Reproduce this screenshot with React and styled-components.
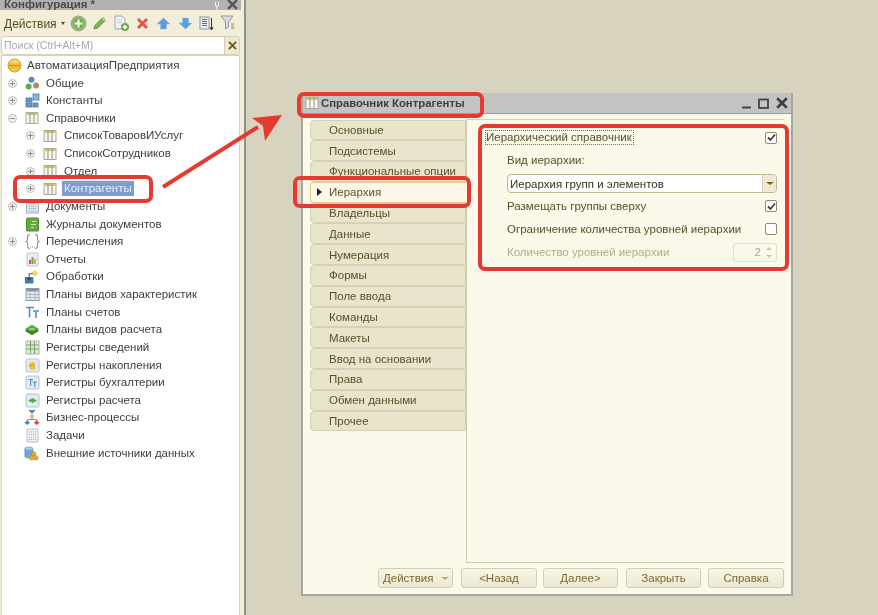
import React from 'react';
import styled, { createGlobalStyle } from 'styled-components';

const Global = createGlobalStyle`
  html, body { margin: 0; padding: 0; height: 100%; }
  body { font-family: "Liberation Sans", Arial, sans-serif; font-size: 11.5px; overflow: hidden; }
`;

const Page = styled.div`
  position: relative;
  width: 878px;
  height: 615px;
  display: flex;
  background: #d8d3bf;
  overflow: hidden;
  filter: blur(0.45px);
`;

/* ---------- left panel ---------- */

const Sidebar = styled.aside`
  width: 244px;
  height: 100%;
  box-sizing: content-box;
  flex: none;
  display: flex;
  flex-direction: column;
  background: #f3eeda;
  border-right: 2px solid #8f8f8b;
`;

const PanelTitle = styled.div`
  height: 10px;
  width: 241px;
  box-sizing: border-box;
  flex: none;
  display: flex;
  align-items: flex-end;
  justify-content: space-between;
  padding: 0 3px 0 4px;
  background: #b2b2b2;
  overflow: hidden;
`;

const PanelTitleText = styled.span`
  font-weight: bold;
  font-size: 11.5px;
  line-height: 12px;
  color: #4a4a48;
`;

const PanelTitleIcons = styled.div`
  display: flex;
  align-items: flex-end;
  gap: 7px;
`;

const Toolbar = styled.div`
  height: 25px;
  margin-top: 1px;
  flex: none;
  display: flex;
  align-items: center;
  padding-left: 4px;
`;

const ToolbarLabel = styled.span`
  color: #5a4a1e;
  font-size: 12px;
  margin-right: 4px;
`;

const ToolButton = styled.span`
  display: inline-flex;
  width: 21.4px;
  justify-content: center;
`;

const SmallArrow = styled.span`
  width: 0;
  height: 0;
  border-left: ${(p) => p.$size || 2.5}px solid transparent;
  border-right: ${(p) => p.$size || 2.5}px solid transparent;
  border-top: ${(p) => (p.$size ? p.$size - 0.5 : 3)}px solid ${(p) => p.$color || '#4a4a30'};
  margin-right: ${(p) => p.$gap ?? 3}px;
`;

const SearchBox = styled.div`
  height: 17px;
  margin: 0 4px 0 1px;
  flex: none;
  display: flex;
  border: 1px solid #d4cfb4;
  border-radius: 3px;
  background: #fff;
  overflow: hidden;
`;

const SearchInput = styled.div`
  flex: 1;
  padding-left: 2px;
  line-height: 17px;
  color: #a9a9a9;
  font-size: 10.6px;
`;

const SearchClear = styled.div`
  width: 14px;
  display: flex;
  align-items: center;
  justify-content: center;
  border-left: 1px solid #d4cfb4;
  background: #efe9d2;
`;

const Tree = styled.div`
  flex: 1;
  margin: 0 4px 0 1px;
  padding-top: 0.6px;
  background: #fff;
  border: 1px solid #d9d4bc;
  border-bottom: 0;
`;

const TreeRow = styled.div`
  height: 17.63px;
  display: flex;
  align-items: center;
  padding-left: ${(p) => p.$indent}px;
  color: #3d3d3d;
  white-space: nowrap;
`;

const Expander = styled.span`
  position: relative;
  width: 9px;
  height: 9px;
  flex: none;
  box-sizing: border-box;
  border: 1px solid #bdbdb8;
  border-radius: 50%;
  background: #f1f1ee;
  margin-right: 7px;
  &::before {
    content: '';
    position: absolute;
    left: 1px;
    right: 1px;
    top: 3px;
    height: 1px;
    background: #8a8a86;
  }
  &::after {
    content: '';
    display: ${(p) => (p.$open ? 'none' : 'block')};
    position: absolute;
    top: 1px;
    bottom: 1px;
    left: 3px;
    width: 1px;
    background: #8a8a86;
  }
`;

const TreeIcon = styled.span`
  width: 16px;
  height: 16px;
  flex: none;
  display: inline-flex;
  align-items: center;
  justify-content: center;
  margin-right: ${(p) => p.$gap}px;
`;

const TreeLabel = styled.span`
  padding: 1px 2px;
  line-height: 13px;
  color: ${(p) => (p.$selected ? '#e8eefa' : 'inherit')};
  background: ${(p) => (p.$selected ? '#7b9dd0' : 'transparent')};
`;

/* ---------- desktop and window ---------- */

const Desktop = styled.main`
  flex: 1;
  padding: 93px 0 0 55px;
`;

const Win = styled.section`
  width: 492px;
  height: 503px;
  box-sizing: border-box;
  display: flex;
  flex-direction: column;
  background: #fbf9ea;
  border: 2px solid #a5a5a3;
  border-top: 0;
`;

const WinTitle = styled.header`
  height: 20px;
  flex: none;
  display: flex;
  align-items: center;
  justify-content: space-between;
  padding: 0 3px 0 2px;
  background: #c3c3c3;
  border-bottom: 1px solid #9c9c9c;
`;

const WinTitleLeft = styled.div`
  display: flex;
  align-items: center;
  gap: 2px;
`;

const WinTitleText = styled.span`
  font-weight: bold;
  font-size: 11.35px;
  color: #3f3f3f;
`;

const WinControls = styled.div`
  display: flex;
  align-items: center;
  gap: 7px;
`;

const WinBody = styled.div`
  flex: 1;
  display: flex;
  padding: 5px 7px 0 7px;
  min-height: 0;
`;

const Tabs = styled.nav`
  width: 156px;
  flex: none;
  display: flex;
  flex-direction: column;
  padding-top: 0.5px;
`;

const Tab = styled.div`
  height: 20.8px;
  box-sizing: border-box;
  flex: none;
  display: flex;
  align-items: center;
  padding-left: 18px;
  position: relative;
  z-index: ${(p) => (p.$active ? 1 : 0)};
  margin-right: ${(p) => (p.$active ? '-1px' : '0')};
  border: 1px solid ${(p) => (p.$active ? '#e3c98e' : '#d6d1b6')};
  border-right: ${(p) => (p.$active ? '0' : '1px solid #d6d1b6')};
  border-radius: 4px 0 0 4px;
  background: ${(p) => (p.$active ? '#fbf9ea' : '#e9e5cd')};
  color: #5b4f28;
  white-space: nowrap;
  overflow: hidden;
`;

const TabMarker = styled.span`
  position: absolute;
  left: 6px;
  top: 5px;
  width: 0;
  height: 0;
  border-top: 4.5px solid transparent;
  border-bottom: 4.5px solid transparent;
  border-left: 5px solid #222;
`;

const Content = styled.div`
  flex: 1;
  display: flex;
  flex-direction: column;
  padding: 10px 7px 0 19px;
  height: 444px;
  box-sizing: border-box;
  border-left: 1px solid #cfc9ac;
  border-top: 1px solid #d8d3b8;
  border-bottom: 1px solid #cfc9ac;
  color: #5b4f28;
`;

const FieldRow = styled.div`
  height: ${(p) => p.$h}px;
  flex: none;
  display: flex;
  align-items: center;
  justify-content: space-between;
  padding-left: ${(p) => p.$indent || 0}px;
  color: ${(p) => (p.$muted ? '#b3a98a' : 'inherit')};
`;

const FocusText = styled.span`
  margin-left: -1px;
  padding: 0 1px 0 0;
  border: 1px dotted #6d6d6d;
  line-height: 13px;
`;

const Check = styled.span`
  width: 10px;
  height: 10px;
  flex: none;
  display: inline-flex;
  align-items: center;
  justify-content: center;
  border: 1px solid #8f8b70;
  border-radius: 2px;
  background: #fff;
`;

const Select = styled.div`
  height: 19px;
  box-sizing: border-box;
  flex: 1;
  display: flex;
  align-items: center;
  border: 1px solid #bdb793;
  border-radius: 4px;
  background: #fff;
  color: #36321f;
  overflow: hidden;
  padding-left: 2px;
`;

const SelectText = styled.span`
  flex: 1;
`;

const SelectArrow = styled.span`
  width: 13px;
  height: 100%;
  display: flex;
  align-items: center;
  justify-content: center;
  border-left: 1px solid #d6d1b6;
  background: #eeead3;
`;

const Spinner = styled.div`
  width: 44px;
  height: 19px;
  display: flex;
  align-items: center;
  justify-content: flex-end;
  box-sizing: border-box;
  border: 1px solid #e3dfca;
  border-radius: 3px;
  background: #fbf9ea;
  color: #a9a38c;
`;

const SpinnerArrows = styled.span`
  width: 14px;
  margin-left: 1px;
  display: flex;
  flex-direction: column;
  align-items: center;
  gap: 5px;
`;

const SpinUp = styled.span`
  width: 0;
  height: 0;
  border-left: 3.5px solid transparent;
  border-right: 3.5px solid transparent;
  border-bottom: 3.5px solid #c9c5b0;
`;

const SpinDown = styled(SpinUp)`
  border-bottom: 0;
  border-top: 3.5px solid #c9c5b0;
`;

const WinFooter = styled.footer`
  height: 33px;
  box-sizing: border-box;
  flex: none;
  display: flex;
  align-items: flex-start;
  justify-content: flex-end;
  padding: 7px 7px 0 0;
`;

const Button = styled.button`
  width: ${(p) => p.$w}px;
  height: 20px;
  margin-left: ${(p) => p.$ml || 0}px;
  padding: 0;
  display: flex;
  align-items: center;
  justify-content: center;
  border: 1px solid #d3ceb2;
  border-radius: 3px;
  background: linear-gradient(#f8f6e6, #ece8d2);
  color: #7a6a34;
  font-family: inherit;
  font-size: 11.5px;
`;

const MenuButton = styled(Button)`
  justify-content: space-between;
  padding: 0 3px 0 4px;
`;

/* ---------- annotations ---------- */

const Callout = styled.div`
  position: absolute;
  box-sizing: border-box;
  left: ${(p) => p.$x}px;
  top: ${(p) => p.$y}px;
  width: ${(p) => p.$w}px;
  height: ${(p) => p.$h}px;
  border: 4px solid #e53a30;
  border-radius: 7px;
  pointer-events: none;
`;

const ArrowLayer = styled.svg`
  position: absolute;
  left: 0;
  top: 0;
  pointer-events: none;
`;

/* ---------- icons ---------- */

const RefIcon = () => (
  <svg width="14" height="14" viewBox="0 0 14 14">
    <rect x="1" y="1.5" width="12" height="11" fill="#f6f6f2" stroke="#a9a99f" />
    <rect x="1.5" y="2" width="11" height="2" fill="#e2c64a" />
    <path d="M5 2v10M9 2v10" stroke="#8f8f86" fill="none" />
  </svg>
);

const RootIcon = () => (
  <svg width="15" height="15" viewBox="0 0 15 15">
    <defs>
      <linearGradient id="rootG" x1="0" y1="0" x2="0" y2="1">
        <stop offset="0" stopColor="#f7e38a" />
        <stop offset="0.55" stopColor="#e8b92f" />
        <stop offset="1" stopColor="#f4d25f" />
      </linearGradient>
    </defs>
    <circle cx="7.5" cy="7.5" r="6.5" fill="url(#rootG)" stroke="#c99d28" />
    <path d="M1.5 7.5h12" stroke="#b98f1e" strokeWidth="0.8" />
  </svg>
);

const CommonIcon = () => (
  <svg width="15" height="15" viewBox="0 0 15 15">
    <circle cx="6.5" cy="3.8" r="3" fill="#4d8ecb" />
    <circle cx="3.6" cy="10.5" r="3" fill="#66a84c" />
    <circle cx="11" cy="9.5" r="3" fill="#b58a62" />
  </svg>
);

const ConstIcon = () => (
  <svg width="15" height="15" viewBox="0 0 15 15">
    <rect x="1" y="5" width="6" height="4" fill="#6b98c4" stroke="#3f6f9f" strokeWidth="0.7" />
    <rect x="1" y="10" width="6" height="4" fill="#6b98c4" stroke="#3f6f9f" strokeWidth="0.7" />
    <rect x="8" y="10" width="5" height="4" fill="#6b98c4" stroke="#3f6f9f" strokeWidth="0.7" />
    <rect x="8" y="1" width="6" height="6" fill="#8fb6d9" stroke="#3f6f9f" strokeWidth="0.7" />
  </svg>
);

const DocIcon = () => (
  <svg width="15" height="15" viewBox="0 0 15 15">
    <rect x="1.5" y="1" width="12" height="13" fill="#dfe6f1" stroke="#a9b4c4" />
    <path d="M3.5 4.5h8M3.5 7h8M3.5 9.5h8M3.5 12h8" stroke="#b6c0d0" />
  </svg>
);

const JournalIcon = () => (
  <svg width="15" height="15" viewBox="0 0 15 15">
    <rect x="1.5" y="1" width="12" height="13" rx="1" fill="#68a846" stroke="#4c8a30" />
    <path d="M7 4.5h4M6 7.5h5M6 10.5h3" stroke="#cfe6bc" />
  </svg>
);

const EnumIcon = () => (
  <svg width="15" height="17" viewBox="0 0 15 17" fill="none" stroke="#8a8f96" strokeWidth="1.1">
    <path d="M5 1.5c-2 0-2.5.8-2.5 2.2v2.5c0 1.2-.5 2-1.5 2.3 1 .3 1.5 1.1 1.5 2.3v2.5c0 1.4.5 2.2 2.5 2.2" />
    <path d="M10 1.5c2 0 2.5.8 2.5 2.2v2.5c0 1.2.5 2 1.5 2.3-1 .3-1.5 1.1-1.5 2.3v2.5c0 1.4-.5 2.2-2.5 2.2" />
    <path d="M5.5 14h.8M7.2 14h.8M8.9 14h.8" stroke="#6b7078" />
  </svg>
);

const ReportIcon = () => (
  <svg width="15" height="15" viewBox="0 0 15 15">
    <rect x="2" y="1" width="11" height="13" rx="1" fill="#e9eff6" stroke="#b9c4d2" />
    <rect x="4" y="8" width="2" height="4" fill="#d35a4a" />
    <rect x="6.5" y="5" width="2" height="7" fill="#6aa550" />
    <rect x="9" y="7" width="2" height="5" fill="#d9b040" />
  </svg>
);

const ProcessingIcon = () => (
  <svg width="17" height="16" viewBox="0 0 17 16">
    <path d="M11.5 0.8l3.2 3.2-3.2 3.2-3.2-3.2z" fill="#f1dc7a" stroke="#cfb24a" strokeWidth="0.6" />
    <rect x="1" y="8" width="9" height="7" rx="1" fill="#3f7fb0" />
    <path d="M5.5 4v6.5M3.6 9l1.9 2.2L7.4 9M6 4.5h3" stroke="#23374a" fill="none" strokeWidth="0.9" />
  </svg>
);

const CharPlanIcon = () => (
  <svg width="15" height="15" viewBox="0 0 15 15">
    <rect x="1" y="1.5" width="13" height="12" fill="#e7ecf2" stroke="#8d99a8" />
    <rect x="1.5" y="2" width="12" height="2.5" fill="#7f95ad" />
    <path d="M5 4.5v9M10 4.5v9M1.5 7.5h12M1.5 10.5h12" stroke="#a9b4c0" />
  </svg>
);

const AccountsIcon = () => (
  <svg width="15" height="15" viewBox="0 0 15 15" fill="none" stroke="#4f93c4" strokeWidth="1.6">
    <path d="M1 2.5h8M4.5 2.5v10" />
    <path d="M8 6h6M11 6v7" />
  </svg>
);

const CalcPlanIcon = () => (
  <svg width="18" height="14" viewBox="0 0 18 14">
    <path d="M9 1l8 5-8 5-8-5z" fill="#5ea83e" />
    <path d="M1 8l8 5 8-5-3-2-5 3-5-3z" fill="#3d8a2a" />
    <path d="M5.5 6h7" stroke="#d8efc8" strokeWidth="1" />
  </svg>
);

const InfoRegIcon = () => (
  <svg width="15" height="15" viewBox="0 0 15 15">
    <rect x="1" y="1" width="13" height="13" fill="#dfe7da" stroke="#aeb8b0" />
    <path d="M1 5h13M1 9h13M5.5 1v13M9.5 1v13" stroke="#7da465" />
  </svg>
);

const AccumRegIcon = () => (
  <svg width="15" height="15" viewBox="0 0 15 15">
    <rect x="1" y="1" width="13" height="13" rx="1.5" fill="#e3ebf4" stroke="#b3c1d0" />
    <ellipse cx="7.5" cy="5.8" rx="3.2" ry="1.7" fill="#efc53c" />
    <ellipse cx="7" cy="8" rx="3.2" ry="1.7" fill="#e3ae2a" />
    <ellipse cx="7.5" cy="10.2" rx="3.2" ry="1.7" fill="#efc53c" />
  </svg>
);

const AccountRegIcon = () => (
  <svg width="15" height="15" viewBox="0 0 15 15" fill="none">
    <rect x="1" y="1" width="13" height="13" rx="1.5" fill="#e3ebf4" stroke="#b3c1d0" />
    <path d="M3.5 4.5h4.5M5.7 4.5v6.5M7.5 7h4.5M9.7 7v5" stroke="#4f93c4" strokeWidth="1.2" />
  </svg>
);

const CalcRegIcon = () => (
  <svg width="15" height="15" viewBox="0 0 15 15">
    <rect x="1" y="1" width="13" height="13" rx="1.5" fill="#e3ebf4" stroke="#b3c1d0" />
    <path d="M3 7.5l4.5-2.5 4.5 2.5-4.5 2.5z" fill="#5ea83e" />
  </svg>
);

const BusinessIcon = () => (
  <svg width="17" height="17" viewBox="0 0 17 17">
    <path d="M4.5 0.5h8l-4 4z" fill="#4a86c0" />
    <rect x="6.5" y="5" width="4" height="4" fill="#e6b98c" />
    <path d="M8.5 8.5v2M3.5 12v-1.5h10V12" stroke="#8a8a8a" fill="none" />
    <path d="M3.5 11.5l3 2.7-3 2.3-3-2.3z" fill="#4a86c0" />
    <path d="M13.5 11.5l3 2.7-3 2.3-3-2.3z" fill="#db4a3a" />
  </svg>
);

const TaskIcon = () => (
  <svg width="15" height="15" viewBox="0 0 15 15">
    <rect x="2" y="1" width="11" height="13" rx="1" fill="#eef1f5" stroke="#b9c1cc" />
    <path d="M4 4h7M4 6.5h7M4 9h7M4 11.5h7" stroke="#b3a8a0" strokeDasharray="1 1" />
  </svg>
);

const ExternalIcon = () => (
  <svg width="18" height="17" viewBox="0 0 18 17">
    <path d="M1 3c0-2.4 9-2.4 9 0v9c0 2-9 2-9 0z" fill="#6fa8d6" stroke="#3f78ab" strokeWidth="0.6" />
    <ellipse cx="5.5" cy="3" rx="4.5" ry="1.5" fill="#a5cbe8" />
    <circle cx="11" cy="9" r="2.5" fill="#e4ae35" stroke="#a87a1b" strokeWidth="0.5" />
    <circle cx="8.5" cy="13.5" r="2.5" fill="#e4ae35" stroke="#a87a1b" strokeWidth="0.5" />
    <circle cx="13.5" cy="13.5" r="2.5" fill="#e4ae35" stroke="#a87a1b" strokeWidth="0.5" />
  </svg>
);

const tree = [
  { label: 'АвтоматизацияПредприятия', Icon: RootIcon, root: true },
  { label: 'Общие', Icon: CommonIcon, exp: 'plus' },
  { label: 'Константы', Icon: ConstIcon, exp: 'plus' },
  { label: 'Справочники', Icon: RefIcon, exp: 'minus' },
  { label: 'СписокТоваровИУслуг', Icon: RefIcon, exp: 'plus', child: true },
  { label: 'СписокСотрудников', Icon: RefIcon, exp: 'plus', child: true },
  { label: 'Отдел', Icon: RefIcon, exp: 'plus', child: true },
  { label: 'Контрагенты', Icon: RefIcon, exp: 'plus', child: true, selected: true },
  { label: 'Документы', Icon: DocIcon, exp: 'plus' },
  { label: 'Журналы документов', Icon: JournalIcon },
  { label: 'Перечисления', Icon: EnumIcon, exp: 'plus' },
  { label: 'Отчеты', Icon: ReportIcon },
  { label: 'Обработки', Icon: ProcessingIcon },
  { label: 'Планы видов характеристик', Icon: CharPlanIcon },
  { label: 'Планы счетов', Icon: AccountsIcon },
  { label: 'Планы видов расчета', Icon: CalcPlanIcon },
  { label: 'Регистры сведений', Icon: InfoRegIcon },
  { label: 'Регистры накопления', Icon: AccumRegIcon },
  { label: 'Регистры бухгалтерии', Icon: AccountRegIcon },
  { label: 'Регистры расчета', Icon: CalcRegIcon },
  { label: 'Бизнес-процессы', Icon: BusinessIcon },
  { label: 'Задачи', Icon: TaskIcon },
  { label: 'Внешние источники данных', Icon: ExternalIcon },
];

const tabs = [
  'Основные', 'Подсистемы', 'Функциональные опции', 'Иерархия', 'Владельцы', 'Данные', 'Нумерация',
  'Формы', 'Поле ввода', 'Команды', 'Макеты', 'Ввод на основании', 'Права', 'Обмен данными', 'Прочее',
];

const Tick = () => (
  <svg width="9" height="9" viewBox="0 0 9 9" fill="none" stroke="#3f3f3f" strokeWidth="1.8">
    <path d="M1 4.5l2.5 2.5L8 1.5" />
  </svg>
);

const Cross = ({ size = 10, color = '#5a5a58', width = 2.2 }) => (
  <svg width={size} height={size} viewBox="0 0 10 10" fill="none" stroke={color} strokeWidth={width}>
    <path d="M1 1l8 8M9 1l-8 8" />
  </svg>
);

function TreeItem({ item }) {
  const { Icon } = item;
  if (item.root) {
    return (
      <TreeRow $indent={4}>
        <TreeIcon $gap={3}><Icon /></TreeIcon>
        <TreeLabel>{item.label}</TreeLabel>
      </TreeRow>
    );
  }
  // строки без раскрывашки сдвигаем на ширину значка
  const indent = item.child ? 24 : item.exp ? 6 : 22;
  return (
    <TreeRow $indent={indent}>
      {item.exp && <Expander $open={item.exp === 'minus'} />}
      <TreeIcon $gap={4}><Icon /></TreeIcon>
      <TreeLabel $selected={item.selected}>{item.label}</TreeLabel>
    </TreeRow>
  );
}

export default function App() {
  return (
    <Page>
      <Global />
      <Sidebar>
        <PanelTitle>
          <PanelTitleText>Конфигурация *</PanelTitleText>
          <PanelTitleIcons>
            <svg width="6" height="8" viewBox="0 0 6 8" fill="none" stroke="#f2f2f2"><path d="M1.5 0v4h3V0M3 4v4" /></svg>
            <Cross size={11} color="#555" width={2.2} />
          </PanelTitleIcons>
        </PanelTitle>
        <Toolbar>
          <ToolbarLabel>Действия</ToolbarLabel>
          <SmallArrow $gap={3} />
          <ToolButton>
            <svg width="17" height="17" viewBox="0 0 17 17">
              <circle cx="8.5" cy="8.5" r="7.5" fill="#8dbb6b" stroke="#a3a790" />
              <circle cx="8.5" cy="8.5" r="5" fill="#6ead48" />
              <path d="M8.5 4.5v8M4.5 8.5h8" stroke="#fff" strokeWidth="2" />
            </svg>
          </ToolButton>
          <ToolButton>
            <svg width="15" height="15" viewBox="0 0 15 15">
              <path d="M2 13l.8-3.5L9.5 2.8l2.7 2.7-6.7 6.7z" fill="#7ab648" stroke="#4f8a2b" strokeWidth="0.7" />
              <path d="M9.5 2.8l1.3-1.3 2.7 2.7-1.3 1.3z" fill="#dfe8b0" stroke="#4f8a2b" strokeWidth="0.7" />
            </svg>
          </ToolButton>
          <ToolButton>
            <svg width="17" height="17" viewBox="0 0 17 17">
              <path d="M2 1h7l3 3v10H2z" fill="#eef2f7" stroke="#9aa6b5" />
              <path d="M4 5h5M4 7.5h5" stroke="#c2cad5" />
              <circle cx="12" cy="12" r="4" fill="#6ead48" />
              <path d="M12 9.8v4.4M9.8 12h4.4" stroke="#fff" strokeWidth="1.4" />
            </svg>
          </ToolButton>
          <ToolButton>
            <svg width="13" height="13" viewBox="0 0 13 13" fill="none" stroke="#e2574a" strokeWidth="3">
              <path d="M2 2l9 9M11 2l-9 9" />
            </svg>
          </ToolButton>
          <ToolButton>
            <svg width="15" height="13" viewBox="0 0 15 13">
              <path d="M7.5 1L14 7h-3.5v5h-6V7H1z" fill="#5a9fdc" stroke="#8fbfe8" strokeWidth="0.6" />
            </svg>
          </ToolButton>
          <ToolButton>
            <svg width="15" height="13" viewBox="0 0 15 13">
              <path d="M7.5 12L14 6h-3.5V1h-6v5H1z" fill="#5a9fdc" stroke="#8fbfe8" strokeWidth="0.6" />
            </svg>
          </ToolButton>
          <ToolButton>
            <svg width="15" height="16" viewBox="0 0 15 16">
              <rect x="1" y="1" width="9" height="12" fill="#e7edf4" stroke="#8d99a8" />
              <path d="M3 3.5h5M3 5.5h5M3 7.5h5M3 9.5h5" stroke="#5b7288" />
              <path d="M12.5 2v11M10.8 11l1.7 3 1.7-3" stroke="#333" fill="none" />
            </svg>
          </ToolButton>
          <ToolButton>
            <svg width="17" height="17" viewBox="0 0 17 17">
              <path d="M1 1h12l-4.5 6v5L5.5 14V7z" fill="#d9dee3" stroke="#8f969c" />
              <path d="M11 9h2M11 11h3M11 13h3" stroke="#6aa550" />
              <path d="M13 9h2M13 13h2" stroke="#d9a63a" />
            </svg>
          </ToolButton>
        </Toolbar>
        <SearchBox>
          <SearchInput>Поиск (Ctrl+Alt+M)</SearchInput>
          <SearchClear><Cross size={9} color="#6e5a1e" width={2.2} /></SearchClear>
        </SearchBox>
        <Tree>
          {tree.map((item) => <TreeItem key={item.label} item={item} />)}
        </Tree>
      </Sidebar>

      <Desktop>
        <Win>
          <WinTitle>
            <WinTitleLeft>
              <RefIcon />
              <WinTitleText>Справочник Контрагенты</WinTitleText>
            </WinTitleLeft>
            <WinControls>
              <svg width="9" height="11" viewBox="0 0 9 11"><path d="M0 9.5h9" stroke="#444" strokeWidth="2" /></svg>
              <svg width="11" height="11" viewBox="0 0 11 11" fill="none" stroke="#444"><rect x="1" y="1.5" width="9" height="8.5" strokeWidth="1.8" /></svg>
              <Cross size={12} color="#3f3f3f" width={2.2} />
            </WinControls>
          </WinTitle>
          <WinBody>
            <Tabs>
              {tabs.map((name) => (
                <Tab key={name} $active={name === 'Иерархия'}>
                  {name === 'Иерархия' && <TabMarker />}
                  {name}
                </Tab>
              ))}
            </Tabs>
            <Content>
              <FieldRow $h={15}>
                <FocusText>Иерархический справочник</FocusText>
                <Check><Tick /></Check>
              </FieldRow>
              <FieldRow $indent={21} $h={29}>Вид иерархии:</FieldRow>
              <FieldRow $indent={21} $h={19}>
                <Select>
                  <SelectText>Иерархия групп и элементов</SelectText>
                  <SelectArrow><SmallArrow $size={4} $color="#7a6420" $gap={0} /></SelectArrow>
                </Select>
              </FieldRow>
              <FieldRow $indent={21} $h={26}>
                Размещать группы сверху
                <Check><Tick /></Check>
              </FieldRow>
              <FieldRow $indent={21} $h={20}>
                Ограничение количества уровней иерархии
                <Check />
              </FieldRow>
              <FieldRow $indent={21} $h={26} $muted>
                Количество уровней иерархии
                <Spinner>
                  2
                  <SpinnerArrows><SpinUp /><SpinDown /></SpinnerArrows>
                </Spinner>
              </FieldRow>
            </Content>
          </WinBody>
          <WinFooter>
            <MenuButton $w={75}>
              Действия
              <SmallArrow $size={4} $color="#b5ad8d" $gap={0} />
            </MenuButton>
            <Button $w={76} $ml={8}>&lt;Назад</Button>
            <Button $w={75} $ml={6}>Далее&gt;</Button>
            <Button $w={75} $ml={8}>Закрыть</Button>
            <Button $w={76} $ml={7}>Справка</Button>
          </WinFooter>
        </Win>
      </Desktop>

      <Callout $x={13} $y={175} $w={140} $h={28} />
      <Callout $x={297} $y={92} $w={187} $h={26} />
      <Callout $x={293} $y={176} $w={178} $h={32} />
      <Callout $x={478} $y={124} $w={311} $h={147} />
      <ArrowLayer width="878" height="615">
        <path d="M163 187L258 127" stroke="#e53a30" strokeWidth="4" fill="none" />
        <path d="M282 115L252 118L263 126L265 141z" fill="#e53a30" />
      </ArrowLayer>
    </Page>
  );
}
